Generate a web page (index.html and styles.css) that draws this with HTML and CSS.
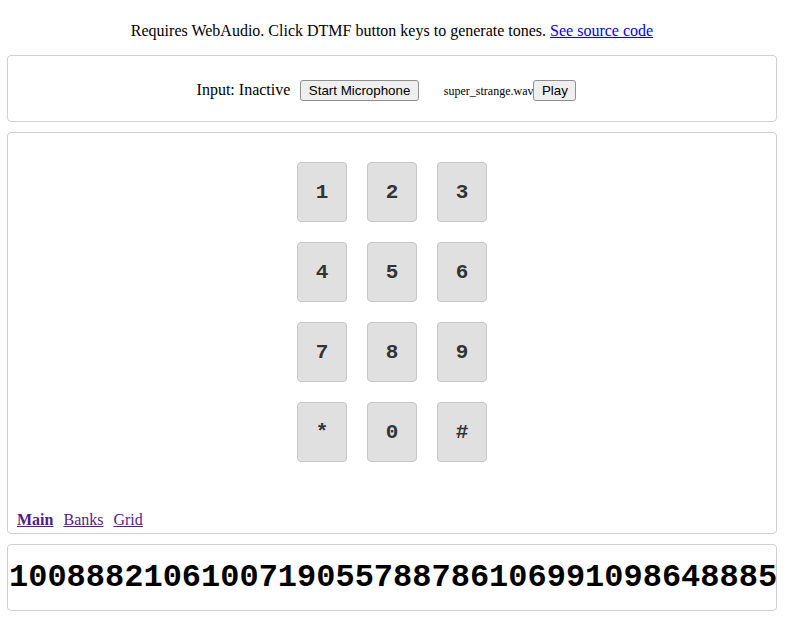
FILE: index.html
```html
<!DOCTYPE html>
<html>
<head>
<meta charset="utf-8">
<title>DTMF</title>
<link rel="stylesheet" href="styles.css">
</head>
<body>
<div class="page">
  <p class="intro">Requires WebAudio. Click DTMF button keys to generate tones. <a class="src" href="#">See source code</a></p>

  <div class="panel controls">
    <span class="status">Input: Inactive</span>
    <button class="btn mic">Start Microphone</button>
    <span class="file">super_strange.wav</span><button class="btn play">Play</button>
  </div>

  <div class="panel pad">
    <div class="keys">
      <div class="key">1</div>
      <div class="key">2</div>
      <div class="key">3</div>
      <div class="key">4</div>
      <div class="key">5</div>
      <div class="key">6</div>
      <div class="key">7</div>
      <div class="key">8</div>
      <div class="key">9</div>
      <div class="key">*</div>
      <div class="key">0</div>
      <div class="key">#</div>
    </div>
    <nav class="tabs">
      <a class="tab active" href="#">Main</a>
      <a class="tab" href="#">Banks</a>
      <a class="tab" href="#">Grid</a>
    </nav>
  </div>

  <div class="panel output">
    <div class="digits">1008882106100719055788786106991098648885</div>
  </div>
</div>
</body>
</html>
```

FILE: styles.css
```css
html, body {
  margin: 0;
  padding: 0;
  background: #fff;
}

body {
  font-family: "Liberation Serif", "Times New Roman", serif;
  font-size: 16px;
  color: #000;
  overflow: hidden;
}

.page {
  width: 770px;
  margin: 0 0 0 7px;
  padding-top: 1px;
}

.intro {
  text-align: center;
  margin: 21px 0 15px;
  line-height: 18px;
}

.src {
  color: #0000ee;
}

.panel {
  border: 1px solid #cfcfcf;
  border-radius: 4px;
  background: #fff;
}

.controls {
  display: flex;
  justify-content: center;
  align-items: baseline;
  padding: 24px 0 20px 0;
}

.status {
  margin-right: 10px;
}

.btn {
  font-family: "Liberation Sans", Arial, sans-serif;
  font-size: 13.33px;
  color: #000;
  background: #efefef;
  border: 1px solid #8f8f8f;
  border-radius: 3px;
  padding: 1px 7.5px;
  height: 21px;
  line-height: 17px;
}

.mic {
  margin-right: 25px;
}

.file {
  font-size: 12px;
}

.play {
  margin-right: 11px;
}

.pad {
  margin-top: 10px;
  height: 400px;
  display: flex;
  flex-direction: column;
  justify-content: space-between;
  padding: 0;
}

.keys {
  margin-top: 29px;
  align-self: center;
  display: grid;
  grid-template-columns: repeat(3, 50px);
  grid-auto-rows: 60px;
  gap: 20px;
}

.key {
  box-sizing: border-box;
  background: #e0e0e0;
  border: 1px solid #c8c8c8;
  border-radius: 4px;
  display: flex;
  align-items: center;
  justify-content: center;
  font-family: "Liberation Mono", "Courier New", monospace;
  font-weight: bold;
  font-size: 21px;
  color: #333;
  cursor: pointer;
}

.tabs {
  display: flex;
  gap: 10px;
  padding: 0 0 4px 9px;
  line-height: 18px;
}

.tab {
  color: #551a8b;
}

.active {
  font-weight: bold;
}

.output {
  margin-top: 10px;
  height: 65px;
  display: flex;
  align-items: center;
  overflow: hidden;
}

.digits {
  font-family: "Liberation Mono", "Courier New", monospace;
  font-weight: bold;
  font-size: 32px;
  line-height: 36px;
  padding-left: 1px;
  white-space: nowrap;
  color: #000;
}
```
